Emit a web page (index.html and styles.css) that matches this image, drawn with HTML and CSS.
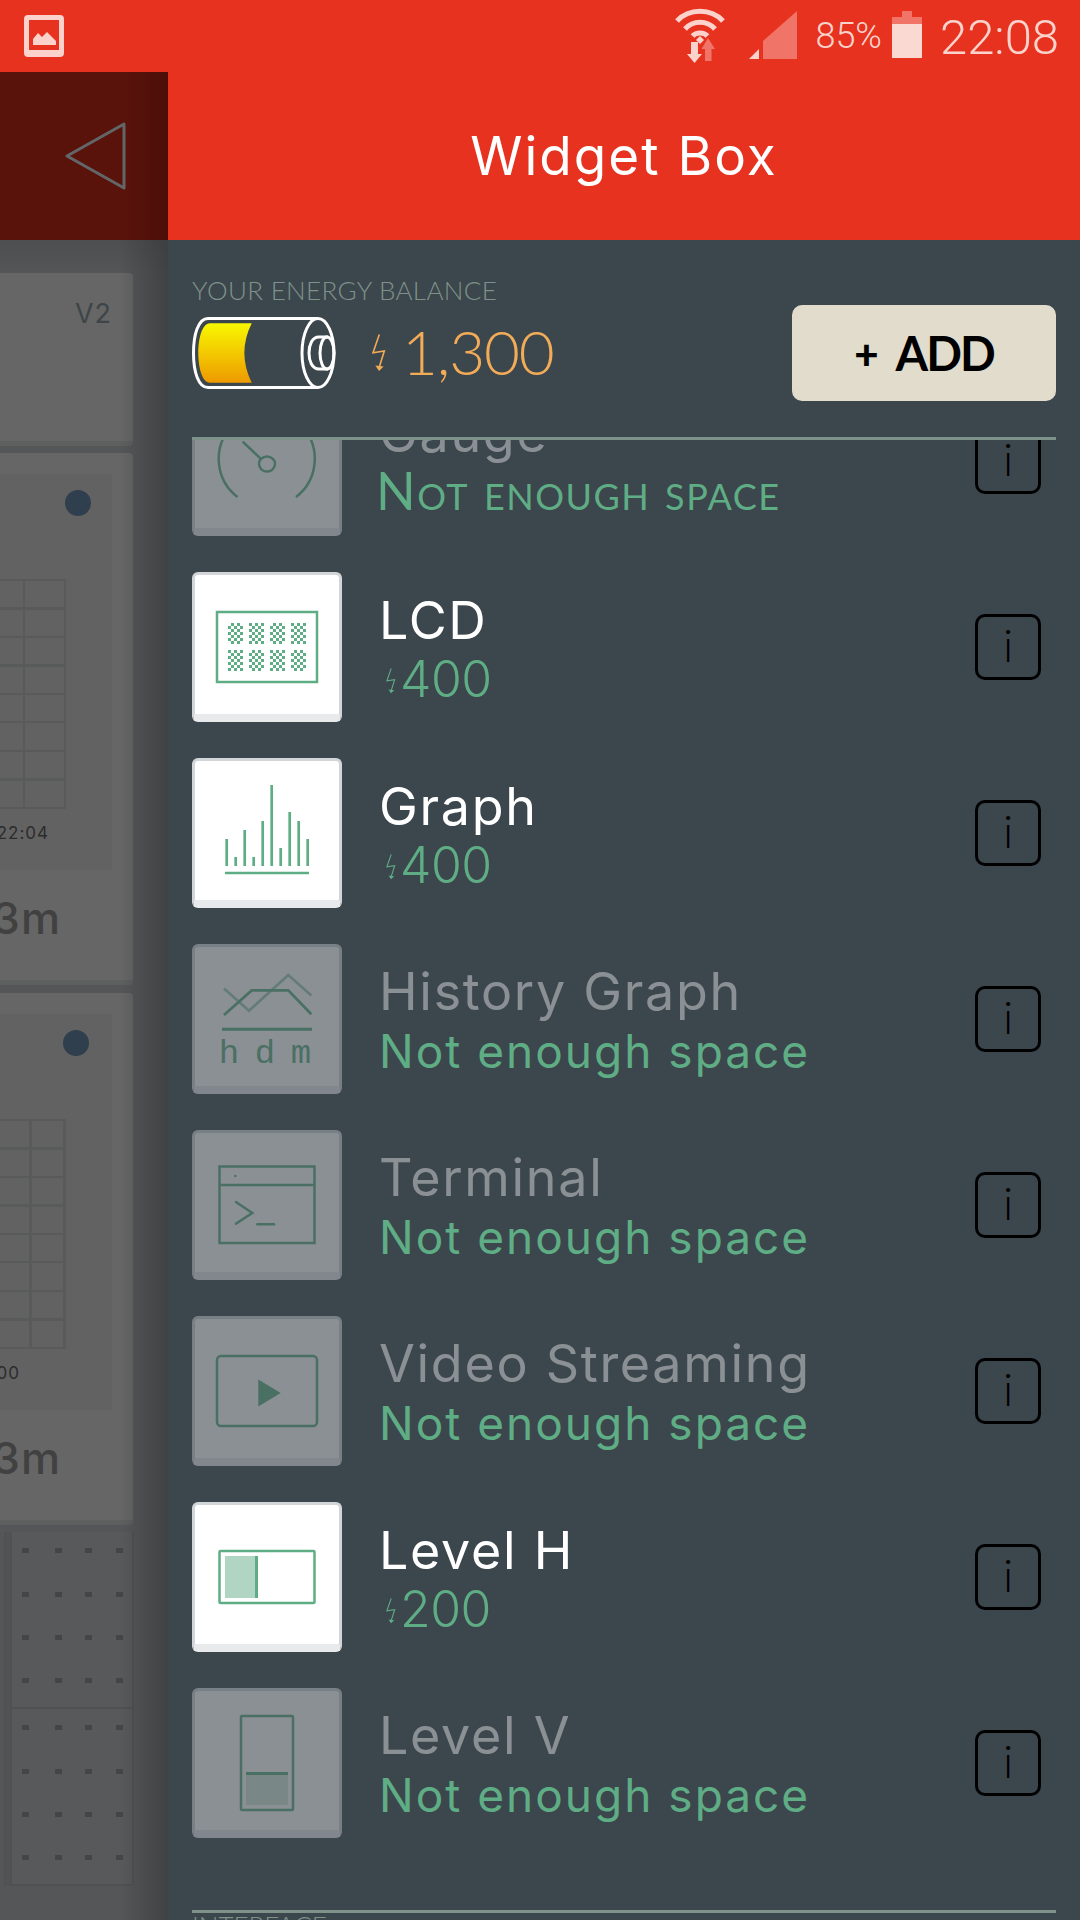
FILE: index.html
```html
<!DOCTYPE html>
<html>
<head>
    <title>Widget Box</title>
    <meta charset="UTF-8">
    <link rel="stylesheet" href="styles.css">
</head>
<body>
<svg class="defs" width="0" height="0">
    <defs>
        <symbol id="bolt" viewBox="0 0 14 38">
            <path d="M7.3 .5 1 18.8 12.3 17 7.3 33" fill="none" stroke="currentColor" stroke-width="1.6"/>
            <path d="M3.3 31.5 11.6 32.5 7 37Z" fill="currentColor"/>
        </symbol>
        <pattern id="checker" width="6" height="6" patternUnits="userSpaceOnUse">
            <rect width="3" height="3" fill="#5fad85"/>
            <rect x="3" y="3" width="3" height="3" fill="#5fad85"/>
        </pattern>
        <linearGradient id="charge" x1="0" y1="0" x2="0" y2="1">
            <stop offset="0" stop-color="#f8f800"/>
            <stop offset="1" stop-color="#ee9a00"/>
        </linearGradient>
    </defs>
</svg>

<header class="status-bar">
    <svg class="status-picture" width="40" height="42" viewBox="0 0 40 42">
        <path fill-rule="evenodd" d="M4 0H36a4 4 0 0 1 4 4V38a4 4 0 0 1-4 4H4a4 4 0 0 1-4-4V4a4 4 0 0 1 4-4ZM5 5V35H35V5Z"/>
        <path d="M9 30V24L14 18 18 22 23 17 32 26V30Z"/>
    </svg>
    <svg class="status-wifi" width="50" height="56" viewBox="0 0 50 56">
        <g fill="none" stroke-width="5">
            <path d="M2 16C14 3 36 3 48 16"/>
            <path d="M10 24C18 15 32 15 40 24"/>
            <path d="M17.500 31C21 27 29 27 32.500 31"/>
        </g>
        <path class="wifi-tip" d="M21 35 25 31 29 35 25 39Z"/>
        <path class="dim" d="M33 33 40 44H36.500V56H30V44H26.500Z"/>
        <path class="wifi-tip" d="M16 37H23V49H27L19.500 58 12 49H16Z"/>
    </svg>
    <svg class="status-signal" width="48" height="48" viewBox="0 0 48 48">
        <path class="dim" d="M14 48V30L48 0V48Z"/>
        <path class="wifi-tip" d="M0 48 10 38V48Z"/>
    </svg>
    <span class="status-percent">85%</span>
    <div class="status-battery">
        <div class="battery-tip"></div>
        <div class="battery-top"></div>
        <div class="battery-level"></div>
    </div>
    <span class="status-time">22:08</span>
</header>

<div class="topbar">
    <div class="back">
        <svg width="62" height="68" viewBox="0 0 62 68">
            <path d="M59 2 2 34 59 66Z" fill="none" stroke="#626668" stroke-width="3" stroke-linejoin="round"/>
        </svg>
    </div>
    <h1 class="title">Widget Box</h1>
</div>

<div class="main">
    <div class="dashboard">
        <div class="tile tile-small">
            <span class="pin">V2</span>
        </div>
        <div class="tile tile-graph">
            <span class="led"></span>
            <div class="plot">
                <div class="grid"></div>
                <div class="plot-time">22:04</div>
            </div>
            <div class="tile-range">3m</div>
        </div>
        <div class="tile tile-graph tile-graph-alt">
            <span class="led"></span>
            <div class="plot">
                <div class="grid"></div>
                <div class="plot-time">00</div>
            </div>
            <div class="tile-range">3m</div>
        </div>
        <div class="board">
            <div class="board-cell"></div>
            <div class="board-cell"></div>
        </div>
    </div>

    <div class="panel">
        <div class="balance">
            <div class="balance-label">YOUR ENERGY BALANCE</div>
            <div class="balance-row">
                <svg class="battery" width="146" height="72" viewBox="0 0 146 72">
                    <path d="M18 6.300H59.700Q45 36 59.700 65.700H18C10 65.700 6.300 50 6.300 36S10 6.300 18 6.300Z" fill="url(#charge)"/>
                    <g fill="none" stroke="#fff" stroke-width="3">
                        <path d="M126 1.500H16C6 1.500 1.500 18 1.500 36S6 70.500 16 70.500H126"/>
                        <ellipse cx="126" cy="36" rx="16" ry="34.500"/>
                        <path d="M136 20H127C120 20 117 28 117 36S120 52 127 52H136"/>
                        <ellipse cx="135" cy="36" rx="7" ry="16"/>
                    </g>
                </svg>
                <svg class="bolt-large" width="14" height="38"><use href="#bolt"/></svg>
                <span class="balance-value">1,300</span>
                <button class="add-button"><span class="add-plus">+</span>ADD</button>
            </div>
        </div>

        <div class="list-clip">
            <div class="widget-list">
                <div class="widget disabled">
                    <div class="widget-icon">
                        <svg width="144" height="144" viewBox="3 3 144 144">
                            <g fill="none" stroke="#5fad85" stroke-width="2.500">
                                <path d="M45.500 111A48 48 0 1 1 104 111"/>
                                <path d="M50.700 55.700 69 73"/>
                                <ellipse cx="75" cy="78" rx="8" ry="7.500"/>
                            </g>
                        </svg>
                    </div>
                    <div class="widget-text">
                        <div class="widget-name">Gauge</div>
                        <div class="widget-note widget-note-caps">Not enough space</div>
                    </div>
                    <div class="info">i</div>
                </div>

                <div class="widget">
                    <div class="widget-icon">
                        <svg width="144" height="144" viewBox="3 3 144 144">
                            <rect x="25" y="40" width="100" height="70" fill="none" stroke="#5fad85" stroke-width="2.500"/>
                            <g fill="url(#checker)">
                                <rect x="36" y="51" width="15" height="21"/>
                                <rect x="57" y="51" width="15" height="21"/>
                                <rect x="78" y="51" width="15" height="21"/>
                                <rect x="99" y="51" width="15" height="21"/>
                                <rect x="36" y="78" width="15" height="21"/>
                                <rect x="57" y="78" width="15" height="21"/>
                                <rect x="78" y="78" width="15" height="21"/>
                                <rect x="99" y="78" width="15" height="21"/>
                            </g>
                        </svg>
                    </div>
                    <div class="widget-text">
                        <div class="widget-name">LCD</div>
                        <div class="widget-note"><svg class="bolt-small" width="10" height="26"><use href="#bolt"/></svg><span class="price">400</span></div>
                    </div>
                    <div class="info">i</div>
                </div>

                <div class="widget">
                    <div class="widget-icon">
                        <svg width="144" height="144" viewBox="3 3 144 144">
                            <g stroke="#5fad85" stroke-width="2.700">
                                <path d="M33 115H117"/>
                                <path d="M34.700 81V108M43.700 99V108M52.700 72V108M61.700 99V108M70.700 63V108M79.700 27V108M88.700 90V108M97.700 54V108M106.700 63V108M115.700 81V108"/>
                            </g>
                        </svg>
                    </div>
                    <div class="widget-text">
                        <div class="widget-name">Graph</div>
                        <div class="widget-note"><svg class="bolt-small" width="10" height="26"><use href="#bolt"/></svg><span class="price">400</span></div>
                    </div>
                    <div class="info">i</div>
                </div>

                <div class="widget disabled">
                    <div class="widget-icon">
                        <svg width="144" height="144" viewBox="3 3 144 144">
                            <g fill="none" stroke="#5fad85" stroke-width="2.700">
                                <path d="M32 44.600 57 66.700 96.300 31 119.300 51.400" stroke-opacity=".6"/>
                                <path d="M32 71 59.700 46.400H96.300L119.300 70.300"/>
                                <path d="M30 85.300H120" stroke-width="3"/>
                            </g>
                            <g class="range-letters">
                                <text x="37" y="119">h</text>
                                <text x="73" y="119">d</text>
                                <text x="109" y="119">m</text>
                            </g>
                        </svg>
                    </div>
                    <div class="widget-text">
                        <div class="widget-name">History Graph</div>
                        <div class="widget-note">Not enough space</div>
                    </div>
                    <div class="info">i</div>
                </div>

                <div class="widget disabled">
                    <div class="widget-icon">
                        <svg width="144" height="144" viewBox="3 3 144 144">
                            <g fill="none" stroke="#5fad85" stroke-width="2.500">
                                <rect x="27.500" y="36.500" width="95" height="76.500"/>
                                <path d="M27.500 55H122.500"/>
                                <path d="M44 72 60.300 83 44 93.600" stroke-linecap="round"/>
                                <path d="M65.300 94.300H82" stroke-linecap="round"/>
                            </g>
                            <circle cx="43.300" cy="46" r="1.200" fill="#5fad85"/>
                        </svg>
                    </div>
                    <div class="widget-text">
                        <div class="widget-name">Terminal</div>
                        <div class="widget-note">Not enough space</div>
                    </div>
                    <div class="info">i</div>
                </div>

                <div class="widget disabled">
                    <div class="widget-icon">
                        <svg width="144" height="144" viewBox="3 3 144 144">
                            <rect x="25" y="40" width="100" height="70" rx="4" fill="none" stroke="#5fad85" stroke-width="2.500"/>
                            <path d="M66.300 63.600 88.700 76.900 66.300 90.400Z" fill="#5fad85"/>
                        </svg>
                    </div>
                    <div class="widget-text">
                        <div class="widget-name">Video Streaming</div>
                        <div class="widget-note">Not enough space</div>
                    </div>
                    <div class="info">i</div>
                </div>

                <div class="widget">
                    <div class="widget-icon">
                        <svg width="144" height="144" viewBox="3 3 144 144">
                            <rect x="27.500" y="49" width="95" height="52" rx="1" fill="none" stroke="#5fad85" stroke-width="2.500"/>
                            <rect x="33" y="54" width="30" height="42" fill="#b0d5c2"/>
                            <rect x="63" y="54" width="3" height="42" fill="#5fad85"/>
                        </svg>
                    </div>
                    <div class="widget-text">
                        <div class="widget-name">Level H</div>
                        <div class="widget-note"><svg class="bolt-small" width="10" height="26"><use href="#bolt"/></svg><span class="price">200</span></div>
                    </div>
                    <div class="info">i</div>
                </div>

                <div class="widget disabled">
                    <div class="widget-icon">
                        <svg width="144" height="144" viewBox="3 3 144 144">
                            <rect x="49" y="28" width="52" height="94" rx="1" fill="none" stroke="#5fad85" stroke-width="2.500"/>
                            <rect x="54" y="84" width="42" height="33" fill="#b0d5c2" fill-opacity=".55"/>
                            <rect x="54" y="84" width="42" height="3" fill="#5fad85"/>
                        </svg>
                    </div>
                    <div class="widget-text">
                        <div class="widget-name">Level V</div>
                        <div class="widget-note">Not enough space</div>
                    </div>
                    <div class="info">i</div>
                </div>
            </div>
        </div>
        <div class="section-title">INTERFACE</div>
    </div>
</div>

</body>
</html>
```

FILE: styles.css
```css
body {
    margin: 0;
    width: 1080px;
    height: 1920px;
    overflow: hidden;
    background: #3c464d;
    font-family: 'Inter', 'Noto Sans', sans-serif;
    color: #fff;
}

.defs {
    position: absolute;
}

/* status bar */
.status-bar {
    height: 72px;
    background: #e6321e;
    display: flex;
    align-items: center;
    fill: #fbd3cc;
    stroke: #fbd3cc;
    color: #fbd3cc;
}

.status-bar svg path {
    stroke-width: 0;
}

.status-bar svg g path {
    stroke-width: 5;
}

.status-bar .dim {
    fill: #f07468;
}

.status-picture {
    margin-left: 24px;
    margin-right: auto;
}

.status-wifi {
    margin-right: 24px;
    margin-top: -7px;
    overflow: visible;
}

.status-signal {
    margin-right: 18px;
    margin-top: -2px;
}

.status-percent {
    font-family: 'Roboto', sans-serif;
    font-weight: 300;
    font-size: 36px;
    margin-right: 10px;
}

.status-battery {
    width: 30px;
    height: 47px;
    margin-right: 18px;
    margin-top: -4px;
    display: flex;
    flex-direction: column;
    align-items: center;
}

.battery-tip {
    width: 10px;
    height: 6px;
    background: #f07468;
}

.battery-top {
    width: 30px;
    height: 7px;
    background: #f07468;
}

.battery-level {
    width: 30px;
    height: 34px;
    background: #fbd9d3;
}

.status-time {
    font-family: 'Roboto', sans-serif;
    font-weight: 300;
    font-size: 49px;
    margin-right: 21px;
    padding-top: 2px;
}

/* top bar */
.topbar {
    height: 168px;
    background: #e6321e;
    display: flex;
}

.back {
    width: 168px;
    background: linear-gradient(90deg, #5a130b 0%, #5a130b 70%, #4c0f08 100%);
    display: flex;
    align-items: center;
    padding-left: 65px;
    box-sizing: border-box;
}

.title {
    flex: 1;
    margin: 0;
    text-align: center;
    font-weight: 400;
    font-size: 53px;
    letter-spacing: 2px;
    line-height: 168px;
}

.main {
    display: flex;
    height: 1680px;
}

/* dimmed dashboard on the left */
.dashboard {
    width: 168px;
    flex: none;
    position: relative;
    overflow: hidden;
    background: linear-gradient(#4c4e4f 0, #555657 36px);
    padding-top: 33px;
    box-sizing: border-box;
}

.dashboard::after {
    content: "";
    position: absolute;
    top: 0;
    right: 0;
    bottom: 0;
    width: 48px;
    background: linear-gradient(90deg, rgba(50, 52, 54, 0) 0%, rgba(50, 52, 54, 0.6) 100%);
}

.tile {
    width: 133px;
    background: #666;
    border-bottom: 5px solid #5e5f5f;
    border-radius: 0 4px 4px 0;
    position: relative;
    box-sizing: border-box;
}

.tile-small {
    height: 173px;
}

.pin {
    position: absolute;
    top: 24px;
    right: 21px;
    font-size: 27px;
    letter-spacing: 1px;
    color: #3d4548;
}

.tile-graph {
    height: 532px;
    margin-top: 7px;
    padding-top: 21px;
}

.tile-graph-alt {
    margin-top: 8px;
}

.led {
    position: absolute;
    left: 65px;
    top: 37px;
    width: 26px;
    height: 26px;
    border-radius: 50%;
    background: #2f3f4d;
}

.plot {
    width: 112px;
    height: 396px;
    background: #626262;
    padding-top: 105px;
    box-sizing: border-box;
}

.grid {
    width: 66px;
    height: 228px;
    background:
        linear-gradient(#595b5b 0 0) 23px 0 / 2px 100% no-repeat,
        linear-gradient(#595b5b 0 0) 64px 0 / 2px 100% no-repeat,
        repeating-linear-gradient(#595b5b 0 2px, transparent 2px 28.5px);
    border-bottom: 2px solid #595b5b;
}

.plot-time {
    width: 49px;
    margin-top: 16px;
    font-size: 17px;
    letter-spacing: 1px;
    line-height: 16px;
    color: #2c2c2c;
    white-space: nowrap;
    direction: rtl;
}

.tile-range {
    width: 61px;
    margin-top: 28px;
    font-size: 44px;
    font-weight: 500;
    letter-spacing: 1px;
    line-height: 40px;
    color: #414141;
    text-align: right;
    white-space: nowrap;
    direction: rtl;
}

.tile-graph-alt .led {
    left: 63px;
}

.tile-graph-alt .grid {
    background:
        linear-gradient(#595b5b 0 0) 29px 0 / 3px 100% no-repeat,
        linear-gradient(#595b5b 0 0) 63px 0 / 3px 100% no-repeat,
        repeating-linear-gradient(#595b5b 0 2px, transparent 2px 28.5px);
}

.tile-graph-alt .plot-time {
    width: 20px;
}

.board {
    margin-top: 7px;
    margin-left: 10px;
}

.board-cell {
    width: 124px;
    height: 177px;
    box-sizing: border-box;
    border: 2px solid #505152;
    border-top: none;
    box-shadow: -4px 0 0 #525354, -6px 0 0 #505152;
    background-color: #58595a;
    background-size: 7px 5px;
    background-repeat: no-repeat;
    background-image:
        linear-gradient(#454545 0 0), linear-gradient(#454545 0 0), linear-gradient(#454545 0 0), linear-gradient(#454545 0 0),
        linear-gradient(#454545 0 0), linear-gradient(#454545 0 0), linear-gradient(#454545 0 0), linear-gradient(#454545 0 0),
        linear-gradient(#454545 0 0), linear-gradient(#454545 0 0), linear-gradient(#454545 0 0), linear-gradient(#454545 0 0),
        linear-gradient(#454545 0 0), linear-gradient(#454545 0 0), linear-gradient(#454545 0 0), linear-gradient(#454545 0 0);
    background-position:
        10px 16px, 43px 16px, 73px 16px, 104px 16px,
        10px 60px, 43px 60px, 73px 60px, 104px 60px,
        10px 103px, 43px 103px, 73px 103px, 104px 103px,
        10px 146px, 43px 146px, 73px 146px, 104px 146px;
}

/* widget panel */
.panel {
    flex: 1;
    background: #3c464d;
    min-width: 0;
}

.balance {
    height: 200px;
    box-sizing: border-box;
    margin: 0 24px;
    padding-top: 35px;
    border-bottom: 3px solid #7f9289;
}

.balance-label {
    font-family: 'Lato', sans-serif;
    font-weight: 300;
    font-size: 26px;
    letter-spacing: .35px;
    line-height: 30px;
    color: #7f9289;
}

.balance-row {
    display: flex;
    align-items: center;
    height: 96px;
}

.bolt-large {
    margin-left: 34px;
    color: #f2ab57;
}

.balance-value {
    margin-left: 16px;
    margin-bottom: 5px;
    font-family: 'Lato', sans-serif;
    font-weight: 300;
    font-size: 62px;
    letter-spacing: -1.200px;
    color: #f2ab57;
}

.add-button {
    margin-left: auto;
    width: 264px;
    height: 96px;
    border: none;
    border-radius: 10px;
    background: #e2dccd;
    color: #000;
    font-family: 'Lato', sans-serif;
    font-weight: 700;
    font-size: 47px;
    letter-spacing: -2px;
    padding: 0;
    display: flex;
    align-items: center;
    justify-content: center;
}

.add-plus {
    font-size: 42px;
    font-weight: 900;
    margin-right: 19px;
}

.list-clip {
    height: 1470px;
    overflow: hidden;
}

.widget-list {
    margin-top: -54px;
    display: flex;
    flex-direction: column;
    gap: 36px;
}

.widget {
    display: flex;
    align-items: center;
    height: 150px;
    padding: 0 39px 0 24px;
}

.widget-icon {
    width: 150px;
    height: 150px;
    flex: none;
    box-sizing: border-box;
    background: #fff;
    border: 3px solid #d2d6d9;
    border-bottom: 8px solid #e8eaec;
    border-radius: 6px;
}

.widget-icon svg {
    display: block;
}

.disabled .widget-icon,
.disabled .widget-name {
    opacity: 0.4;
}

.widget-text {
    margin-left: 37px;
    padding-top: 5px;
}

.widget-name {
    font-size: 52px;
    font-weight: 400;
    letter-spacing: 1.700px;
    line-height: 58px;
}

.disabled .widget-name {
    margin-top: -1px;
    margin-bottom: 1px;
}

.widget-note {
    display: flex;
    align-items: center;
    font-size: 46px;
    letter-spacing: 2px;
    line-height: 58px;
    color: #5fad85;
    white-space: nowrap;
}

.widget-note-caps {
    font-family: 'Lato', sans-serif;
    font-variant: small-caps;
    font-size: 52px;
    letter-spacing: 1.500px;
    margin-top: -3px;
    margin-bottom: 3px;
    margin-left: -3px;
}

.bolt-small {
    margin: 4px 4px 0 7px;
}

.price {
    font-size: 50px;
    font-weight: 300;
    letter-spacing: -.5px;
}

.info {
    margin-left: auto;
    width: 66px;
    height: 66px;
    box-sizing: border-box;
    border: 3px solid #000;
    border-radius: 10px;
    color: #000;
    font-family: 'Lato', sans-serif;
    font-weight: 300;
    font-size: 46px;
    line-height: 56px;
    text-align: center;
}

.range-letters {
    font-family: 'Liberation Mono', monospace;
    font-size: 34px;
    fill: #5fad85;
    text-anchor: middle;
}

.section-title {
    margin: 0 24px;
    border-top: 3px solid #7f9289;
    font-family: 'Lato', sans-serif;
    font-weight: 300;
    font-size: 26px;
    line-height: 24px;
    color: #7f9289;
}
```
